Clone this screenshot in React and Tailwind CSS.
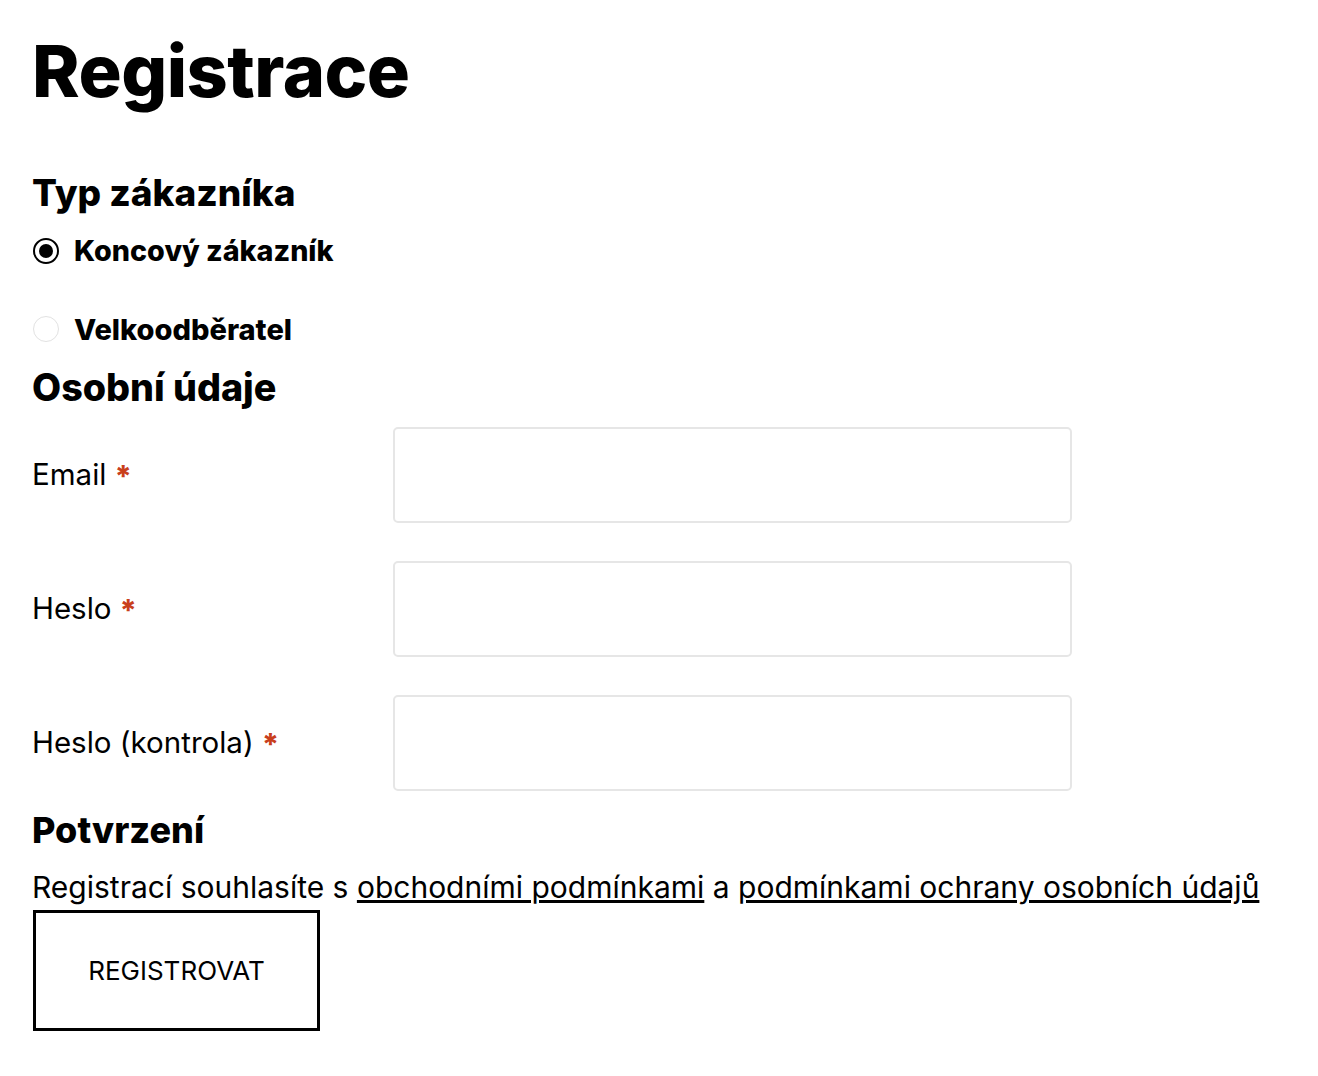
export default function App() {
  const Req = () => (
    <span className="ml-[8px] relative top-[1px] text-[30px] leading-none font-extrabold text-[#c9401c]">*</span>
  );
  const rows = ["Email", "Heslo", "Heslo (kontrola)"];
  return (
    <div className="min-h-screen bg-white text-black font-['Inter',sans-serif] pl-[32px]">
      <h1 className="pt-[35px] text-[72px] leading-[72px] font-extrabold tracking-[-0.5px]">Registrace</h1>
      <h2 className="mt-[68px] text-[37px] leading-[36px] font-extrabold">Typ zákazníka</h2>
      <div className="mt-[20px] h-[40px] flex items-center gap-[15px]">
        <span className="ml-[1px] w-[26px] h-[26px] rounded-full border-[2px] border-black flex items-center justify-center">
          <span className="w-[14px] h-[14px] rounded-full bg-black" />
        </span>
        <span className="text-[28.7px] font-extrabold leading-none">Koncový zákazník</span>
      </div>
      <div className="mt-[38px] h-[40px] flex items-center gap-[15px]">
        <span className="ml-[1px] w-[26px] h-[26px] rounded-full border-[1.5px] border-[#e2e2e2]" />
        <span className="text-[29px] font-extrabold leading-none">Velkoodběratel</span>
      </div>
      <h2 className="mt-[20px] text-[37.7px] leading-[36px] font-extrabold">Osobní údaje</h2>
      <div className="mt-[22px] flex flex-col gap-[38px]">
        {rows.map((r) => (
          <div key={r} className="flex items-center">
            <label className="w-[361px] text-[29.5px] leading-none flex items-center">
              {r}
              <Req />
            </label>
            <input className="w-[679px] h-[96px] border-2 border-[#e6e6e6] rounded-[5px] outline-none" />
          </div>
        ))}
      </div>
      <h2 className="mt-[21px] text-[36px] leading-[36px] font-extrabold">Potvrzení</h2>
      <p className="mt-[24px] text-[30px] leading-[30px]">
        Registrací souhlasíte s <a className="underline">obchodními podmínkami</a> a{" "}
        <a className="underline">podmínkami ochrany osobních údajů</a>
      </p>
      <button className="ml-[1px] mt-[8px] w-[287px] h-[121px] border-[3px] border-black text-[26px] leading-none">
        REGISTROVAT
      </button>
    </div>
  );
}
